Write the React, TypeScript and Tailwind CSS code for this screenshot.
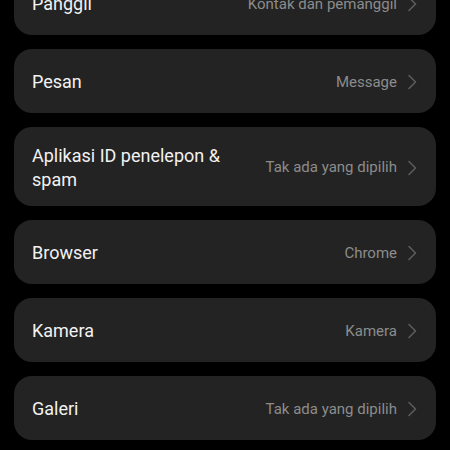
import React from 'react';

type Row = { title: string; value: string; tall?: boolean };

const rows: Row[] = [
    { title: 'Panggil', value: 'Kontak dan pemanggil' },
    { title: 'Pesan', value: 'Message' },
    { title: 'Aplikasi ID penelepon & spam', value: 'Tak ada yang dipilih', tall: true },
    { title: 'Browser', value: 'Chrome' },
    { title: 'Kamera', value: 'Kamera' },
    { title: 'Galeri', value: 'Tak ada yang dipilih' },
];

const Chevron: React.FC = () => (
    <svg width="10" height="16" viewBox="0 0 10 16" fill="none" className="shrink-0">
        <path d="M2 1.5 L8.5 8 L2 14.5" stroke="#5c5c5c" strokeWidth="1.6" strokeLinecap="round" strokeLinejoin="round" />
    </svg>
);

const SettingRow: React.FC<{ row: Row }> = ({ row }) => (
    <div className={`flex items-center bg-[#232323] rounded-[18px] pl-[18px] pr-[19px] pt-[2px] ${row.tall ? 'h-[79px]' : 'h-[64px]'}`}>
        <div className="flex-1 min-w-0 pr-8">
            <p className="text-[18px] leading-[24px] text-[#f2f2f2] max-w-[200px]">{row.title}</p>
        </div>
        <span className="text-[15px] text-[#8c8c8c] mr-[10px] whitespace-nowrap">{row.value}</span>
        <Chevron />
    </div>
);

const App: React.FC = () => {
    return (
        <div className="w-[450px] h-[450px] bg-black overflow-hidden" style={{ fontFamily: 'Roboto, "Noto Sans", sans-serif' }}>
            <div className="flex flex-col gap-[14px] px-[14px] -mt-[29px]">
                {rows.map((row, i) => (
                    <SettingRow key={i} row={row} />
                ))}
            </div>
        </div>
    );
};

export default App;
